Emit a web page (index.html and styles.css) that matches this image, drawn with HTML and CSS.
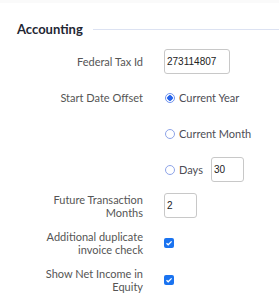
FILE: index.html
```html
<!DOCTYPE html>
<html lang="en">
<head>
    <meta charset="UTF-8">
    <title>Accounting</title>
    <link rel="stylesheet" href="styles.css">
</head>
<body>
    <div class="topbar"></div>

    <div class="section">
        <h2 class="section-title">Accounting</h2>

        <div class="row">
            <label class="lbl">Federal Tax Id</label>
            <div class="ctl">
                <input type="text" class="txt" value="273114807">
            </div>
        </div>

        <div class="row">
            <label class="lbl">Start Date Offset</label>
            <div class="ctl options">
                <div class="opt"><span class="radio checked"></span>Current Year</div>
                <div class="opt"><span class="radio"></span>Current Month</div>
                <div class="opt"><span class="radio"></span>Days<input type="text" class="txt small days" value="30"></div>
            </div>
        </div>

        <div class="row">
            <label class="lbl">Future Transaction<br>Months</label>
            <div class="ctl">
                <input type="text" class="txt small" value="2">
            </div>
        </div>

        <div class="row">
            <label class="lbl">Additional duplicate<br>invoice check</label>
            <div class="ctl"><span class="check"></span></div>
        </div>

        <div class="row">
            <label class="lbl">Show Net Income in<br>Equity</label>
            <div class="ctl"><span class="check"></span></div>
        </div>
    </div>
</body>
</html>
```

FILE: styles.css
```css
body {
    margin: 0;
    background: #fff;
    font-family: Lato, "Open Sans", sans-serif;
    font-size: 11px;
    color: #555;
}

.topbar {
    height: 3px;
    background: #fafafa;
}

.section {
    padding: 15px 0 0 17px;
}

.section-title {
    display: flex;
    align-items: center;
    margin: 0 0 9px;
    height: 22px;
    font-size: 13px;
    font-weight: bold;
    color: #1f2633;
}

.section-title::after {
    content: "";
    flex: 1;
    height: 1px;
    margin-left: 10px;
    background: #dce2f2;
}

.row {
    display: flex;
    align-items: flex-start;
    margin-bottom: 11px;
}

.lbl {
    width: 126px;
    min-height: 25px;
    display: flex;
    align-items: center;
    justify-content: flex-end;
    text-align: right;
    line-height: 13px;
}

.ctl {
    margin-left: 21px;
    min-height: 25px;
    display: flex;
    align-items: center;
}

.options {
    flex-direction: column;
    align-items: flex-start;
    gap: 11px;
}

.opt {
    height: 25px;
    display: flex;
    align-items: center;
    color: #4d4d55;
}

.txt {
    box-sizing: border-box;
    width: 66px;
    height: 25px;
    padding: 0 2px;
    border: 1px solid #c8c8c8;
    border-radius: 3px;
    font-family: "Liberation Sans", Arial, sans-serif;
    font-size: 10px;
    color: #222;
}

.small {
    width: 33px;
}

.days {
    margin-left: 8px;
}

.radio {
    box-sizing: border-box;
    width: 10px;
    height: 10px;
    margin: 0 4px 0 1px;
    border: 1px solid #8ea4e8;
    border-radius: 50%;
}

.radio.checked {
    border-color: #6f93ee;
    background: radial-gradient(circle, #2563eb 0 2.5px, #fff 3px);
}

.check {
    width: 10px;
    height: 10px;
    border-radius: 2px;
    background: #1a73f0 url("data:image/svg+xml,%3Csvg xmlns='http://www.w3.org/2000/svg' viewBox='0 0 10 10'%3E%3Cpath d='M2.5 5.2l1.7 1.6 3.4-3.4' fill='none' stroke='%23fff' stroke-width='1.3'/%3E%3C/svg%3E") center no-repeat;
}
```
